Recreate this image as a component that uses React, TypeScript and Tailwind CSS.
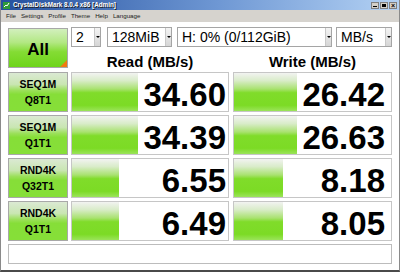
import React from 'react';

interface Result {
  line1: string;
  line2: string;
  read: string;
  write: string;
  readBar: string;
  writeBar: string;
}

const results: Result[] = [
  { line1: 'SEQ1M', line2: 'Q8T1', read: '34.60', write: '26.42', readBar: 'w-[66px]', writeBar: 'w-[63px]' },
  { line1: 'SEQ1M', line2: 'Q1T1', read: '34.39', write: '26.63', readBar: 'w-[66px]', writeBar: 'w-[63px]' },
  { line1: 'RND4K', line2: 'Q32T1', read: '6.55', write: '8.18', readBar: 'w-[47px]', writeBar: 'w-[49px]' },
  { line1: 'RND4K', line2: 'Q1T1', read: '6.49', write: '8.05', readBar: 'w-[47px]', writeBar: 'w-[49px]' },
];

const barBg =
  'bg-[linear-gradient(to_bottom,#f2f3f1_0%,#d9ecc9_20%,#a9e270_42%,#80dc2a_52%,#7cdb25_85%,#9be45a_100%)]';

const Combo: React.FC<{ width: string; text: string }> = ({ width, text }) => (
  <div className={`${width} h-[20px] flex border border-[#a5a5a5] bg-white`}>
    <span className="flex-1 pl-[4px] text-[14px] leading-[18px] text-black whitespace-nowrap overflow-hidden">{text}</span>
    <div className="w-[6px] flex items-center justify-center border-l border-[#c8c8c8] bg-[linear-gradient(to_bottom,#f4f4f4,#d6d6d6)]">
      <div className="w-0 h-0 border-x-[2px] border-t-[2px] border-x-transparent border-t-black" />
    </div>
  </div>
);

const ResultCell: React.FC<{ width: string; bar: string; value: string; pad: string }> = ({ width, bar, value, pad }) => (
  <div className={`${width} h-[40px] flex border border-[#c6c6c6] bg-white`}>
    <div className={`${bar} h-full ${barBg}`} />
    <div className={`flex-1 text-right font-bold text-[33px] leading-[33px] pt-[5px] text-black ${pad}`}>{value}</div>
  </div>
);

export default function App() {
  return (
    <div className="w-[400px] h-[272px] flex flex-col bg-white border-x border-x-[#8a8a8a] border-b-2 border-b-[#4a4a4a] overflow-hidden font-['Liberation_Sans',Arial,sans-serif]">
      {/* Title bar */}
      <div className="h-[10px] flex items-center bg-[linear-gradient(to_right,#24509e,#6f98d4_55%,#b4d2f4)]">
        <svg width="7" height="7" viewBox="0 0 7 7" className="ml-[2px]">
          <rect x="0" y="0" width="7" height="7" fill="#2f9a3a" />
          <path d="M1 5 L3 3 L4 4 L6 1" stroke="#fff" strokeWidth="1" fill="none" />
        </svg>
        <span className="ml-[3px] text-[6.3px] leading-[10px] font-bold text-white [text-shadow:1px_1px_0_#1a1a1a] whitespace-nowrap">
          CrystalDiskMark 8.0.4 x86 [Admin]
        </span>
        <div className="ml-auto mr-[2px] flex gap-px">
          <div className="w-[8px] h-[7px] bg-[#d4d0c8] border border-[#808080] flex items-end justify-center pb-px">
            <div className="w-[4px] h-px bg-black" />
          </div>
          <div className="w-[8px] h-[7px] bg-[#d4d0c8] border border-[#808080] flex items-center justify-center">
            <div className="w-[4px] h-[3px] border border-black border-t-2" />
          </div>
          <div className="w-[8px] h-[7px] bg-[#d4d0c8] border border-[#808080] flex items-center justify-center text-[7px] leading-[5px] font-bold text-black">
            ×
          </div>
        </div>
      </div>

      {/* Menu */}
      <div className="h-[12px] flex items-center gap-[5px] pl-[5px] bg-[#d6d3ce] text-[6.2px] leading-[12px] text-[#222]">
        <span>File</span>
        <span>Settings</span>
        <span>Profile</span>
        <span>Theme</span>
        <span>Help</span>
        <span>Language</span>
      </div>

      {/* Content */}
      <div className="flex-1 flex flex-col pl-[7px] pt-[6px]">
        <div className="flex h-[40px]">
          <div className="relative w-[60px] h-[40px] border border-[#a8a8a8] flex items-center justify-center bg-[linear-gradient(to_bottom,#d2efbd_0%,#b3e884_35%,#84dc34_60%,#6ed41a_100%)]">
            <span className="font-bold text-[17px] leading-[17px] text-black mt-[2px]">All</span>
            <div className="absolute right-0 bottom-0 w-0 h-0 border-l-[7px] border-b-[7px] border-l-transparent border-b-[#f07a10]" />
          </div>
          <div className="ml-[3px] w-[321px] flex flex-col">
            <div className="flex -mt-px">
              <Combo width="w-[30px]" text="2" />
              <div className="ml-[6px]">
                <Combo width="w-[65px]" text="128MiB" />
              </div>
              <div className="ml-[5px]">
                <Combo width="w-[155px]" text="H: 0% (0/112GiB)" />
              </div>
              <div className="ml-[4px]">
                <Combo width="w-[56px]" text="MB/s" />
              </div>
            </div>
            <div className="flex">
              <div className="w-[158px] text-center font-bold text-[15px] leading-[15px] pt-[7px] text-black">Read (MB/s)</div>
              <div className="ml-[4px] w-[159px] text-center font-bold text-[15px] leading-[15px] pt-[7px] text-black">Write (MB/s)</div>
            </div>
          </div>
        </div>

        <div className="mt-[4px] flex flex-col gap-[3px]">
          {results.map((r, i) => (
            <div key={i} className="flex">
              <div className="w-[60px] h-[40px] border border-[#a8a8a8] flex flex-col items-center justify-center font-bold text-[10.5px] leading-[16px] text-black bg-[linear-gradient(to_bottom,#dbe9d3_0%,#c9e6b2_30%,#9be05a_46%,#86de38_56%,#86df38_100%)]">
                <span>{r.line1}</span>
                <span>{r.line2}</span>
              </div>
              <div className="ml-[3px]">
                <ResultCell width="w-[158px]" bar={r.readBar} value={r.read} pad="pr-[2px]" />
              </div>
              <div className="ml-[4px]">
                <ResultCell width="w-[159px]" bar={r.writeBar} value={r.write} pad="pr-[6px]" />
              </div>
            </div>
          ))}
          <div className="w-[384px] h-[20px] border border-[#bcbcbc] bg-white" />
        </div>
      </div>
    </div>
  );
}
